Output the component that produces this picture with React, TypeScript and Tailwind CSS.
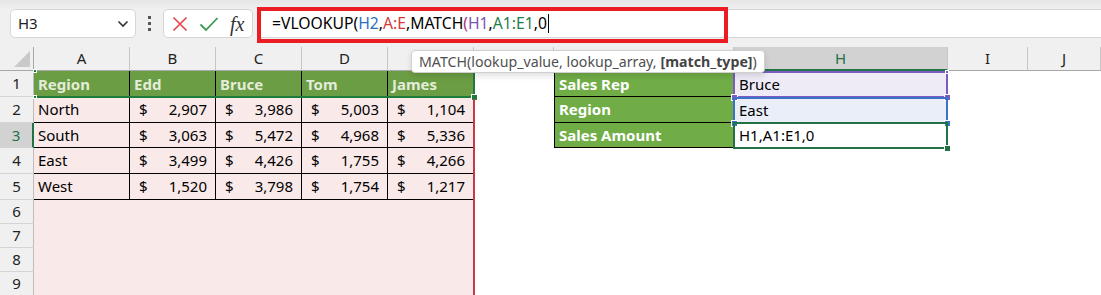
const FONT = { fontFamily: '"Noto Sans", "Open Sans", sans-serif' };

const COLS = [
  { k: "A", w: 96 },
  { k: "B", w: 86 },
  { k: "C", w: 86 },
  { k: "D", w: 86 },
  { k: "E", w: 86 },
  { k: "F", w: 80 },
  { k: "G", w: 180 },
  { k: "H", w: 214 },
  { k: "I", w: 80 },
  { k: "J", w: 73 },
];

const ROW_H = [26, 26, 25, 26, 26, 24, 24, 24, 24];

const TABLE = [
  ["Region", "Edd", "Bruce", "Tom", "James"],
  ["North", "2,907", "3,986", "5,003", "1,104"],
  ["South", "3,063", "5,472", "4,968", "5,336"],
  ["East", "3,499", "4,426", "1,755", "4,266"],
  ["West", "1,520", "3,798", "1,754", "1,217"],
];

const LOOKUP = [
  ["Sales Rep", "Bruce", "bg-[#eeeaf6]"],
  ["Region", "East", "bg-[#e9eef8]"],
  ["Sales Amount", "H1,A1:E1,0", "bg-white"],
];

function Cell({ r, c }: { r: number; c: number }) {
  // columns A-E hold the data table, G-H the lookup block
  if (c <= 4) {
    if (r === 0) {
      return (
        <div className="h-full flex items-center pl-1 bg-[#6b9d44] border-r border-black text-[15px] font-bold text-[#e4ecdb]">
          {TABLE[0][c]}
        </div>
      );
    }
    if (r <= 4) {
      const v = TABLE[r][c];
      return (
        <div className="h-full flex items-center bg-[#f9e9e9] border-r border-b border-black text-[15px] text-black">
          {c === 0 ? (
            <span className="pl-1">{v}</span>
          ) : (
            <div className="flex-1 flex justify-between pl-[9px] pr-[8px]">
              <span>$</span>
              <span>{v}</span>
            </div>
          )}
        </div>
      );
    }
    return <div className="h-full bg-[#f9e9e9]" />;
  }
  if (c === 6 && r <= 2) {
    return (
      <div
        className={`h-full flex items-center pl-1 bg-[#70ad47] border-l border-black border-b ${
          r === 0 ? "border-t" : ""
        } text-[15px] font-bold text-white`}
      >
        {LOOKUP[r][0]}
      </div>
    );
  }
  if (c === 7 && r <= 2) {
    return (
      <div className={`h-full flex items-center pl-[5px] ${LOOKUP[r][2]} text-[15px] text-black`}>
        {LOOKUP[r][1]}
      </div>
    );
  }
  return <div className="h-full bg-white" />;
}

function Handle({ x, y, color, size = 6 }: { x: number; y: number; color: string; size?: number }) {
  return (
    <div
      className="absolute border border-white"
      style={{ left: x - size / 2, top: y - size / 2, width: size, height: size, background: color }}
    />
  );
}

function Toolbar() {
  return (
    <div className="relative h-[47px] bg-[#f0f0f0] bg-gradient-to-b from-[#e6e6e6] to-[#f0f0f0] to-[9px] flex items-start pt-[9px]">
      <div className="ml-[10px] w-[126px] h-[29px] bg-white border border-[#d6d6d6] rounded-[5px] flex items-center justify-between pl-[7px] pr-[6px]">
        <span className="text-[15px] text-[#222]">H3</span>
        <svg width="12" height="8" viewBox="0 0 12 8">
          <path d="M1.5 1.5 L6 6 L10.5 1.5" fill="none" stroke="#333" strokeWidth="1.6" />
        </svg>
      </div>
      <div className="w-[27px] h-[29px] flex flex-col items-center justify-center gap-[3px]">
        <div className="w-[3px] h-[3px] bg-[#555]" />
        <div className="w-[3px] h-[3px] bg-[#555]" />
        <div className="w-[3px] h-[3px] bg-[#555]" />
      </div>
      <div className="w-[90px] h-[29px] bg-white border border-[#d6d6d6] rounded-[5px] flex items-center pl-[8px] gap-[11px]">
        <svg width="16" height="16" viewBox="0 0 16 16">
          <path d="M1.5 1.5 L14.5 14.5 M14.5 1.5 L1.5 14.5" stroke="#e5484d" strokeWidth="1.7" />
        </svg>
        <svg width="20" height="16" viewBox="0 0 20 16">
          <path d="M1.5 8.5 L7 14 L18.5 2" fill="none" stroke="#3a9a4e" strokeWidth="1.8" />
        </svg>
        <span className="text-[20px] italic text-[#333] leading-none" style={{ fontFamily: '"Liberation Serif", serif' }}>
          fx
        </span>
      </div>
      <div className="ml-[4px] flex-1 h-[29px] bg-white border-y border-[#d6d6d6] flex items-center pl-[15px] text-[15.7px] text-black">
        <span>=VLOOKUP(</span>
        <span className="text-[#2a72c0]">H2</span>
        <span>,</span>
        <span className="text-[#d03a3a]">A:E</span>
        <span>,MATCH</span>
        <span className="text-[#b0307a]">(</span>
        <span className="text-[#7b53b3]">H1</span>
        <span>,</span>
        <span className="text-[#23804a]">A1:E1</span>
        <span>,0</span>
        <span className="ml-[1px] w-[1px] h-[19px] bg-black" />
      </div>
      <div className="absolute left-[257px] top-[7px] w-[471px] h-[36px] border-[4px] border-[#ec1c24]" />
    </div>
  );
}

function Sheet() {
  const gridCols = "grid-cols-[34px_96px_86px_86px_86px_86px_80px_180px_214px_80px_73px]";
  return (
    <div className={`relative grid ${gridCols} grid-rows-[24px_26px_26px_25px_26px_26px_24px_24px_24px_24px]`}>
      <div className="bg-[#f0f0f0] border-b border-r border-[#a8a8a8] relative">
        <svg className="absolute right-[3px] bottom-[3px]" width="16" height="16" viewBox="0 0 16 16">
          <path d="M16 0 L16 16 L0 16 Z" fill="#c9c9c9" />
        </svg>
      </div>
      {COLS.map((col) => (
        <div
          key={col.k}
          className={`flex items-center justify-center text-[15px] border-r ${
            col.k === "H"
              ? "bg-[#d2d2d2] border-b-2 border-b-[#217346] border-r-[#c6c6c6] text-[#217346]"
              : "bg-[#f0f0f0] border-b border-b-[#a8a8a8] border-r-[#c6c6c6] text-[#222]"
          }`}
        >
          {col.k}
        </div>
      ))}
      {ROW_H.map((_, r) => (
        <div key={r} className="contents">
          <div
            className={`flex items-center justify-center text-[15px] border-b border-b-[#d4d4d4] ${
              r === 2
                ? "bg-[#d2d2d2] border-r-2 border-r-[#217346] text-[#217346]"
                : "bg-[#f0f0f0] border-r border-r-[#bdbdbd] text-[#222]"
            }`}
          >
            {r + 1}
          </div>
          {COLS.map((_, c) => (
            <Cell key={c} r={r} c={c} />
          ))}
        </div>
      ))}

      {/* range outline of A1:E1 */}
      <div className="absolute left-[34px] top-[24px] w-[441px] h-[27px] border-b-2 border-r-2 border-[#1e7b3c]" />
      <Handle x={474} y={50} color="#1e7b3c" size={7} />
      <Handle x={35} y={24} color="#1e7b3c" size={4} />
      <Handle x={35} y={50} color="#1e7b3c" size={4} />
      {/* range outline of A:E */}
      <div className="absolute left-[473px] top-[52px] w-[2px] h-[200px] bg-[#c8394a]" />

      {/* H1 */}
      <div className="absolute left-[733px] top-[24px] w-[215px] h-[27px] border-2 border-[#7d5bbf]" />
      <Handle x={734} y={50} color="#7d5bbf" size={7} />
      <Handle x={947} y={50} color="#7d5bbf" size={7} />
      <Handle x={947} y={25} color="#7d5bbf" size={4} />
      {/* H2 */}
      <div className="absolute left-[733px] top-[50px] w-[215px] h-[27px] border-2 border-[#3a72c8]" />
      <Handle x={734} y={76} color="#3a72c8" size={7} />
      <Handle x={947} y={76} color="#3a72c8" size={7} />
      {/* H3 active */}
      <div className="absolute left-[733px] top-[75px] w-[215px] h-[27px] border-2 border-[#217346]" />
      <Handle x={947} y={101} color="#217346" size={7} />
    </div>
  );
}

export default function App() {
  return (
    <div className="relative w-[1101px] h-[295px] overflow-hidden bg-white" style={FONT}>
      <Toolbar />
      <Sheet />
      <div className="absolute left-[411px] top-[50px] h-[23px] px-[7px] flex items-center bg-white border border-[#cfcfcf] rounded-[4px] shadow-[0_3px_6px_rgba(0,0,0,0.12)] text-[14.2px] text-[#505050] whitespace-nowrap">
        MATCH(lookup_value, lookup_array, <b className="ml-[4px] text-[#444]">[match_type]</b>)
      </div>
    </div>
  );
}
